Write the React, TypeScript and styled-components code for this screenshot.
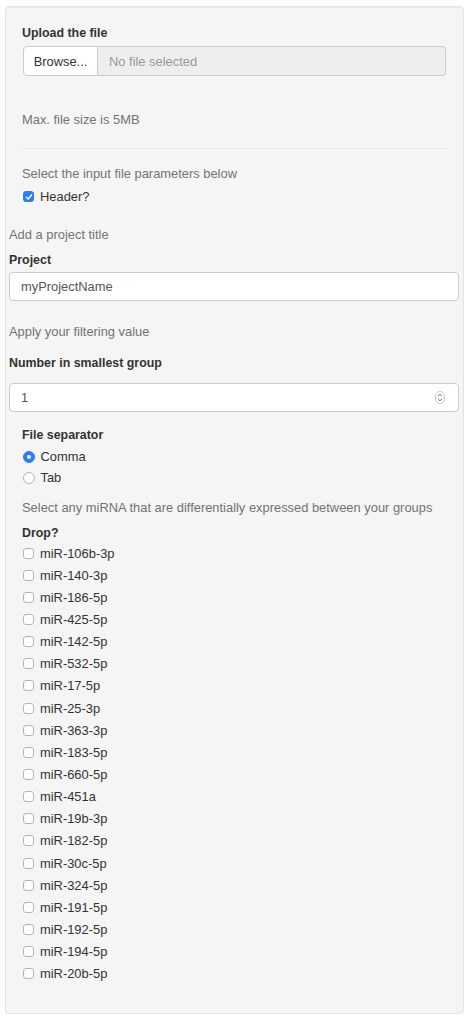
import React from 'react';
import styled, { createGlobalStyle } from 'styled-components';

const GlobalStyle = createGlobalStyle`
  body {
    margin: 0;
    background: #ffffff;
    font-family: "Liberation Sans", Arial, sans-serif;
    font-size: 12.9px;
    color: #333333;
  }
`;

const WellBlock = styled.div`
  box-sizing: border-box;
  margin: 6px 0 0 5px;
  width: 459px;
  min-height: 1007px;
  padding: 17px 17px 28px 16px;
  background: #f5f5f5;
  border: 1px solid #e3e3e3;
  border-radius: 4px;
  box-shadow: inset 0 1px 1px rgba(0, 0, 0, 0.05);
`;

const TextLine = styled.div<{ $top?: number; $bold?: boolean; $muted?: boolean; $wide?: boolean }>`
  height: 18px;
  line-height: 18px;
  margin-top: ${(p) => p.$top ?? 0}px;
  margin-left: ${(p) => (p.$wide ? -13 : 0)}px;
  font-weight: ${(p) => (p.$bold ? 700 : 400)};
  font-size: ${(p) => (p.$bold ? 12.4 : 12.9)}px;
  color: ${(p) => (p.$muted ? '#737373' : '#333333')};
  white-space: nowrap;
`;

const FileRow = styled.div`
  display: flex;
  box-sizing: border-box;
  margin-top: 4px;
  height: 30px;
  margin-left: 1px;
`;

const BrowseButton = styled.div`
  display: flex;
  align-items: center;
  justify-content: center;
  box-sizing: border-box;
  width: 75px;
  height: 100%;
  background: #ffffff;
  border: 1px solid #cccccc;
  border-radius: 4px 0 0 4px;
  color: #333333;
`;

const FileName = styled.div`
  flex: 1;
  display: flex;
  align-items: center;
  box-sizing: border-box;
  height: 100%;
  padding-left: 11px;
  background: #eeeeee;
  border: 1px solid #cccccc;
  border-left: none;
  border-radius: 0 4px 4px 0;
  color: #999999;
`;

const Rule = styled.hr`
  margin: 19px 0 0 0;
  border: 0;
  border-top: 1px solid #e6e6e6;
  height: 0;
`;

const TextInput = styled.div<{ $top: number }>`
  display: flex;
  align-items: center;
  justify-content: space-between;
  box-sizing: border-box;
  margin: ${(p) => p.$top}px -13px 0 -13px;
  height: 29px;
  padding: 0 13px 0 11px;
  background: #ffffff;
  border: 1px solid #cccccc;
  border-radius: 4px;
  color: #555555;
`;

const Spinner = styled.svg`
  display: block;
`;

const OptionRow = styled.div<{ $height?: number; $top?: number }>`
  display: flex;
  align-items: center;
  gap: 6px;
  height: ${(p) => p.$height ?? 21}px;
  margin-top: ${(p) => p.$top ?? 0}px;
  color: #333333;
  white-space: nowrap;
`;

const Box = styled.span<{ $checked?: boolean }>`
  display: inline-flex;
  align-items: center;
  justify-content: center;
  box-sizing: border-box;
  width: 11px;
  height: 11px;
  margin-left: 1px;
  border-radius: 3px;
  background: ${(p) => (p.$checked ? '#2f7cf6' : '#ffffff')};
  border: 1px solid ${(p) => (p.$checked ? '#2f7cf6' : '#b5b5b5')};
`;

const Radio = styled.span<{ $checked?: boolean }>`
  display: inline-flex;
  align-items: center;
  justify-content: center;
  box-sizing: border-box;
  width: 12px;
  height: 12px;
  margin-left: 0.5px;
  border-radius: 50%;
  background: ${(p) => (p.$checked ? '#2f7cf6' : '#ffffff')};
  border: 1px solid ${(p) => (p.$checked ? '#2f7cf6' : '#b5b5b5')};

  &::after {
    content: '';
    display: ${(p) => (p.$checked ? 'block' : 'none')};
    width: 4px;
    height: 4px;
    border-radius: 50%;
    background: #ffffff;
  }
`;

const MirnaList = styled.div`
  display: flex;
  flex-direction: column;
`;

const mirnas = [
  'miR-106b-3p',
  'miR-140-3p',
  'miR-186-5p',
  'miR-425-5p',
  'miR-142-5p',
  'miR-532-5p',
  'miR-17-5p',
  'miR-25-3p',
  'miR-363-3p',
  'miR-183-5p',
  'miR-660-5p',
  'miR-451a',
  'miR-19b-3p',
  'miR-182-5p',
  'miR-30c-5p',
  'miR-324-5p',
  'miR-191-5p',
  'miR-192-5p',
  'miR-194-5p',
  'miR-20b-5p',
];

function Tick() {
  return (
    <svg width="8" height="8" viewBox="0 0 8 8">
      <path d="M1.4 4.2 L3.2 6 L6.6 1.9" fill="none" stroke="#ffffff" strokeWidth="1.5" strokeLinecap="round" strokeLinejoin="round" />
    </svg>
  );
}

function App() {
  return (
    <>
      <GlobalStyle />
      <WellBlock>
        <TextLine $bold>Upload the file</TextLine>
        <FileRow>
          <BrowseButton>Browse...</BrowseButton>
          <FileName>No file selected</FileName>
        </FileRow>
        <TextLine $top={35} $muted>Max. file size is 5MB</TextLine>
        <Rule />
        <TextLine $top={16} $muted>Select the input file parameters below</TextLine>
        <OptionRow $top={3}>
          <Box $checked>
            <Tick />
          </Box>
          Header?
        </OptionRow>

        <TextLine $top={19} $muted $wide>Add a project title</TextLine>
        <TextLine $top={7} $bold $wide>Project</TextLine>
        <TextInput $top={3}>myProjectName</TextInput>

        <TextLine $top={22} $muted $wide>Apply your filtering value</TextLine>
        <TextLine $top={13} $bold $wide>Number in smallest group</TextLine>
        <TextInput $top={11}>
          1
          <Spinner width="10" height="13" viewBox="0 0 10 13">
            <rect x="0.5" y="0.5" width="9" height="12" rx="4.5" fill="#ffffff" stroke="#c8c8c8" />
            <path d="M3.2 5 L5 3.2 L6.8 5" fill="none" stroke="#555555" strokeWidth="0.9" />
            <path d="M3.2 8 L5 9.8 L6.8 8" fill="none" stroke="#555555" strokeWidth="0.9" />
          </Spinner>
        </TextInput>

        <TextLine $top={14} $bold>File separator</TextLine>
        <OptionRow $top={2}>
          <Radio $checked />
          Comma
        </OptionRow>
        <OptionRow>
          <Radio />
          Tab
        </OptionRow>

        <TextLine $top={11} $muted>Select any miRNA that are differentially expressed between your groups</TextLine>
        <TextLine $top={7} $bold>Drop?</TextLine>
        <MirnaList>
          {mirnas.map((m) => (
            <OptionRow key={m} $height={22.15}>
              <Box />
              {m}
            </OptionRow>
          ))}
        </MirnaList>
      </WellBlock>
    </>
  );
}

export default App;
